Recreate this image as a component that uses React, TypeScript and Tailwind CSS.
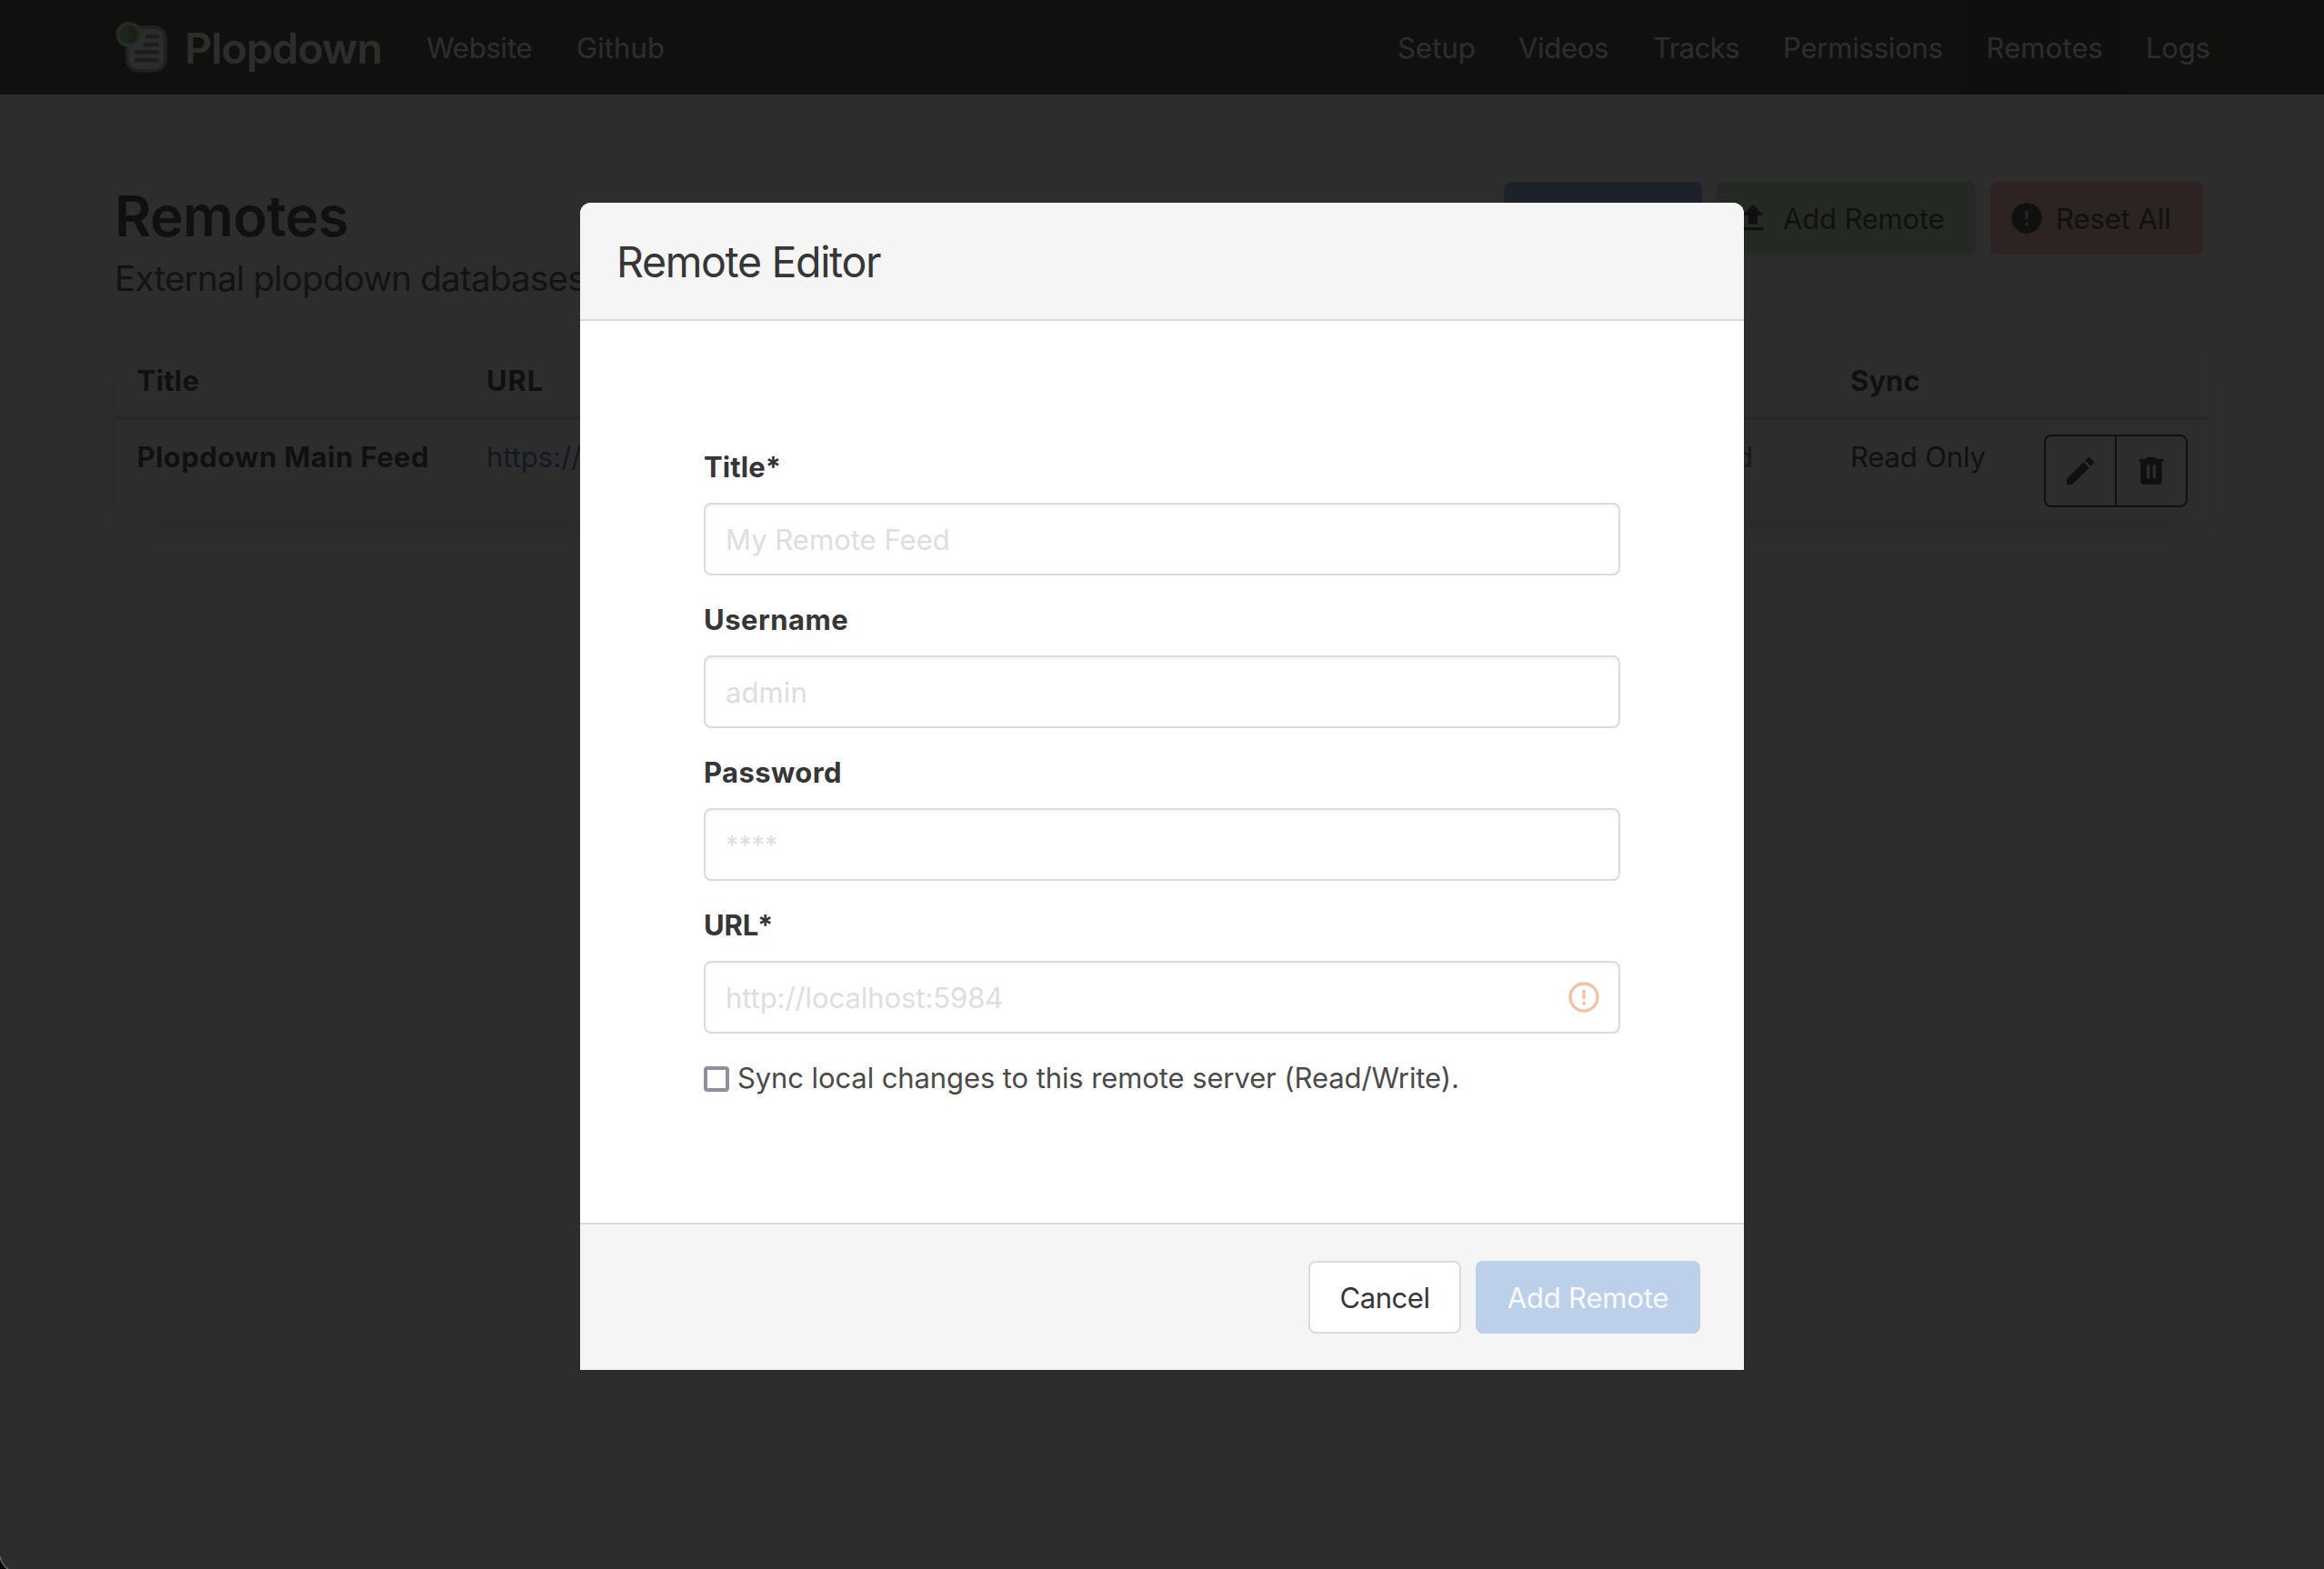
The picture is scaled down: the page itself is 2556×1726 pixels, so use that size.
import React from "react";

type IconProps = { d: string; className?: string };

const Icon = ({ d, className = "" }: IconProps) => (
  <svg viewBox="0 0 24 24" className={`h-10 w-10 shrink-0 ${className}`} fill="currentColor" aria-hidden="true">
    <path d={d} />
  </svg>
);

const icons = {
  upload: "M9,16V10H5L12,3L19,10H15V16H9M5,20V18H19V20H5Z",
  alert: "M13,13H11V7H13M13,17H11V15H13M12,2A10,10 0 0,0 2,12A10,10 0 0,0 12,22A10,10 0 0,0 22,12A10,10 0 0,0 12,2Z",
  alertOutline:
    "M11,15H13V17H11V15M11,7H13V13H11V7M12,2C6.47,2 2,6.5 2,12A10,10 0 0,0 12,22A10,10 0 0,0 22,12A10,10 0 0,0 12,2M12,20A8,8 0 0,1 4,12A8,8 0 0,1 12,4A8,8 0 0,1 20,12A8,8 0 0,1 12,20Z",
  pencil:
    "M20.71,7.04C21.1,6.65 21.1,6 20.71,5.63L18.37,3.29C18,2.9 17.35,2.9 16.96,3.29L15.12,5.12L18.87,8.87M3,17.25V21H6.75L17.81,9.93L14.06,6.18L3,17.25Z",
  trash:
    "M9,3V4H4V6H5V19A2,2 0 0,0 7,21H17A2,2 0 0,0 19,19V6H20V4H15V3H9M9,8H11V17H9V8M13,8H15V17H13V8Z",
};

const Logo = () => (
  <svg viewBox="0 0 64 60" className="h-[60px] w-16 shrink-0" aria-hidden="true">
    <rect x="15.8" y="7.8" width="42.4" height="48" rx="13" fill="#f4f4f4" stroke="#a0a0a0" strokeWidth="3.6" />
    <g stroke="#909090" strokeWidth="4.6" strokeLinecap="round">
      <path d="M38 18.3H49M35.3 27H49M26 35.5H49M26 44.3H49" />
    </g>
    <circle cx="17.7" cy="16" r="14" fill="#e4e4e4" />
    <circle cx="17.7" cy="16" r="10.2" fill="#8ccf80" />
    <path d="M17.7 5.8A10.2 10.2 0 0 1 17.7 26.2Z" fill="#62b054" />
  </svg>
);

const leftNav = [
  { label: "Website", cls: "w-[164px] pl-[23px] tracking-[-0.2px]" },
  { label: "Github", cls: "w-[144px] pl-6 tracking-[0.11px]" },
];

const rightNav = [
  { label: "Setup", cls: "w-[134px] pl-[25px] tracking-[0.1px]" },
  { label: "Videos", cls: "w-[148px] pl-6 tracking-[-0.3px]" },
  { label: "Tracks", cls: "w-[142px] pl-6 tracking-[-0.55px]" },
  { label: "Permissions", cls: "w-[224px] pl-[25px] tracking-[-0.2px]" },
  { label: "Remotes", cls: "w-[176px] pl-[24.5px] tracking-[0.15px] bg-[#2b2b2b]" },
  { label: "Logs", cls: "w-[118px] pl-6 tracking-[-0.2px]" },
];

const fields = [
  { label: "Title*", cls: "tracking-[0.06px]", hint: "My Remote Feed", hintCls: "tracking-[0.02px]", warn: false },
  { label: "Username", cls: "tracking-[0.48px]", hint: "admin", hintCls: "tracking-[0.09px]", warn: false },
  { label: "Password", cls: "tracking-[0.4px]", hint: "****", hintCls: "text-[28px] tracking-[0.4px]", warn: false },
  { label: "URL*", cls: "tracking-[-0.12px]", hint: "http://localhost:5984", hintCls: "tracking-[-0.07px]", warn: true },
];

function Navbar() {
  return (
    <nav className="flex h-[104px] items-stretch bg-[#363630] pl-[124px] pr-[102px] text-white">
      <div className="flex w-[322px] items-center">
        <Logo />
        <span className="ml-[15px] pt-[2px] text-[46.5px] font-semibold tracking-[-0.8px]">Plopdown</span>
      </div>
      {leftNav.map((n) => (
        <a key={n.label} className={`flex items-center pt-px whitespace-nowrap ${n.cls}`}>{n.label}</a>
      ))}
      <div className="ml-auto flex">
        {rightNav.map((n) => (
          <a key={n.label} className={`flex items-center pt-px whitespace-nowrap ${n.cls}`}>{n.label}</a>
        ))}
      </div>
    </nav>
  );
}

function RemotesPage() {
  return (
    <main>
      <header className="flex items-start justify-between pl-[126px] pr-[133px] pt-24">
        <div className="pt-[2px]">
          <h1 className="text-[62px] font-semibold leading-[72px] tracking-[-0.67px] text-[#363631]">Remotes</h1>
          <p className="mt-[2px] text-[38.5px] leading-[60px] tracking-[-0.75px] text-[#4a4a4a]">External plopdown databases</p>
        </div>
        <div className="flex gap-4 text-[#363631]">
          <div className="h-20 w-[218px] rounded-lg bg-[#90a9da]" />
          <div className="flex h-20 w-[285px] items-center rounded-lg bg-[#c0e6b9] pl-5 shadow-[0_2px_8px_rgba(10,10,10,0.12)]">
            <Icon d={icons.upload} />
            <span className="ml-[13px] pt-px tracking-[-0.17px]">Add Remote</span>
          </div>
          <div className="flex h-20 w-[234px] items-center rounded-lg bg-[#f7bcae] pl-5">
            <Icon d={icons.alert} />
            <span className="ml-3 pt-px tracking-[-0.06px]">Reset All</span>
          </div>
        </div>
      </header>

      <section className="mx-[126px] mt-[44px] rounded-xl text-[#363636] shadow-[0_16px_32px_-4px_rgba(10,10,10,0.08),0_0_0_2px_rgba(10,10,10,0.02)]">
        <div className="grid h-[82px] grid-cols-[384px_1500px_212px_1fr] items-center border-b-4 border-[#dbdbdb] font-bold text-[#363631]">
          <div className="pl-[24.5px] tracking-[0.24px]">Title</div>
          <div className="pl-[25px] tracking-[0.8px]">URL</div>
          <div className="pl-[25px] tracking-[0.08px]">Sync</div>
        </div>
        <div className="grid h-28 grid-cols-[384px_1500px_212px_1fr] items-start pt-4">
          <div className="pl-[24.5px] pt-px font-bold tracking-[0.42px] text-[#363631]">Plopdown Main Feed</div>
          <div className="flex justify-between pl-[25px] pr-[82px] pt-px text-[#4570ad]">
            <span>https://</span>
            <span>d</span>
          </div>
          <div className="pl-[25px] pt-px whitespace-nowrap tracking-[-0.14px]">Read Only</div>
          <div className="ml-[26px] flex h-20 w-[158px] rounded-lg border-2 border-[#363631] text-[#363631]">
            <div className="flex w-[78px] items-center justify-center border-r-2 border-[#363631]">
              <Icon d={icons.pencil} />
            </div>
            <div className="flex flex-1 items-center justify-center">
              <Icon d={icons.trash} />
            </div>
          </div>
        </div>
      </section>
    </main>
  );
}

function RemoteEditor() {
  return (
    <div className="absolute left-[638px] top-[223px] flex h-[1284px] w-[1280px] flex-col overflow-hidden rounded-t-xl bg-white">
      <header className="flex h-[130px] items-center border-b-2 border-[#dbdbdb] bg-[#f5f5f5] pl-10 pt-[3px]">
        <h2 className="text-[46.5px] leading-none tracking-[-1.35px] text-[#363636]">Remote Editor</h2>
      </header>
      <div className="flex-1 px-[136px] pt-[137px]">
        {fields.map((f) => (
          <div key={f.label} className="mb-6">
            <div className={`h-12 font-bold text-[#363636] ${f.cls}`}>{f.label}</div>
            <div className="mt-[15px] mb-[25px] flex h-20 items-center justify-between rounded-lg border-2 border-[#dbdbdb] pl-[22px] pr-[18px] text-[#dedede] shadow-[inset_0_2px_4px_rgba(10,10,10,0.05)]">
              <span className={`pt-px ${f.hintCls}`}>{f.hint}</span>
              {f.warn && <Icon d={icons.alertOutline} className="text-[#f6c0a2]" />}
            </div>
          </div>
        ))}
        <label className="flex items-center text-[#4a4a4a]">
          <span className="mt-[2px] h-7 w-7 rounded-[4px] border-4 border-[#8f8f9d] bg-white" />
          <span className="ml-[9px] whitespace-nowrap tracking-[-0.1px]">
            Sync local changes to this remote server (Read/Write).
          </span>
        </label>
      </div>
      <footer className="flex h-[162px] items-center justify-end gap-4 border-t-2 border-[#dbdbdb] bg-[#f5f5f5] pr-12">
        <button className="h-20 w-[168px] rounded-lg border-2 border-[#dbdbdb] bg-white pt-px tracking-[-0.43px] text-[#363636]">
          Cancel
        </button>
        <button className="h-20 w-[247px] rounded-lg bg-[#bcd0e9] pt-px tracking-[-0.17px] text-[#f8f9fb]">Add Remote</button>
      </footer>
    </div>
  );
}

export default function App() {
  return (
    <div className="relative h-[1726px] w-[2556px] overflow-hidden bg-white font-['Inter',sans-serif] text-[31px] leading-[48px]">
      <Navbar />
      <RemotesPage />
      <div className="absolute inset-0 bg-[rgba(10,10,10,0.86)]" />
      <RemoteEditor />
      <svg viewBox="0 0 12 20" className="absolute bottom-0 left-0 h-5 w-3" aria-hidden="true">
        <path d="M0 6C1 12 4 17 9 20H0Z" fill="#000" />
        <path d="M0 6C1 12 4 17 9 20" fill="none" stroke="#6a6a6a" strokeWidth="1.5" />
      </svg>
    </div>
  );
}
